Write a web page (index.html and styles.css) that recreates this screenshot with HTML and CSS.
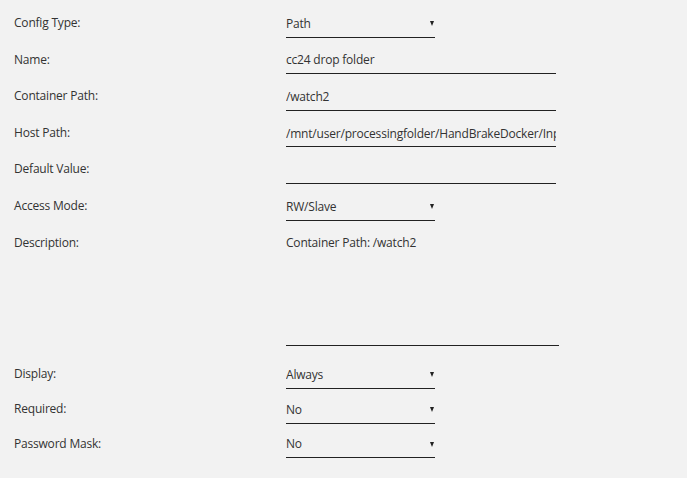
FILE: index.html
```html
<!DOCTYPE html>
<html lang="en">
<head>
  <meta charset="UTF-8">
  <meta name="viewport" content="width=device-width, initial-scale=1.0">
  <title>Add Path, Port, Variable, Label or Device</title>
  <link rel="stylesheet" href="styles.css">
</head>
<body>
  <form class="config">
    <div class="row">
      <label class="label" for="cfg-type">Config Type:</label>
      <div class="field select-wrap">
        <select id="cfg-type" class="select">
          <option>Path</option>
          <option>Port</option>
          <option>Variable</option>
          <option>Label</option>
          <option>Device</option>
        </select>
      </div>
    </div>

    <div class="row">
      <label class="label" for="cfg-name">Name:</label>
      <div class="field"><input id="cfg-name" class="input" type="text" value="cc24 drop folder"></div>
    </div>

    <div class="row">
      <label class="label" for="cfg-target">Container Path:</label>
      <div class="field"><input id="cfg-target" class="input" type="text" value="/watch2"></div>
    </div>

    <div class="row">
      <label class="label" for="cfg-value">Host Path:</label>
      <div class="field"><input id="cfg-value" class="input" type="text" value="/mnt/user/processingfolder/HandBrakeDocker/Input/cc24"></div>
    </div>

    <div class="row">
      <label class="label" for="cfg-default">Default Value:</label>
      <div class="field"><input id="cfg-default" class="input" type="text" value=""></div>
    </div>

    <div class="row">
      <label class="label" for="cfg-mode">Access Mode:</label>
      <div class="field select-wrap">
        <select id="cfg-mode" class="select">
          <option>RW/Slave</option>
          <option>RW</option>
          <option>RO</option>
          <option>RO/Slave</option>
        </select>
      </div>
    </div>

    <div class="row row-desc">
      <label class="label" for="cfg-desc">Description:</label>
      <div class="field"><textarea id="cfg-desc" class="textarea">Container Path: /watch2</textarea></div>
    </div>

    <div class="row row-compact">
      <label class="label" for="cfg-display">Display:</label>
      <div class="field select-wrap">
        <select id="cfg-display" class="select">
          <option>Always</option>
          <option>Advanced</option>
        </select>
      </div>
    </div>

    <div class="row row-compact">
      <label class="label" for="cfg-required">Required:</label>
      <div class="field select-wrap">
        <select id="cfg-required" class="select">
          <option>No</option>
          <option>Yes</option>
        </select>
      </div>
    </div>

    <div class="row row-compact">
      <label class="label" for="cfg-mask">Password Mask:</label>
      <div class="field select-wrap">
        <select id="cfg-mask" class="select">
          <option>No</option>
          <option>Yes</option>
        </select>
      </div>
    </div>
  </form>
</body>
</html>
```

FILE: styles.css
```css
html, body {
  margin: 0;
  background-color: #f2f2f2;
}
body {
  font-family: "Open Sans", "Liberation Sans", sans-serif;
  font-size: 12px;
  letter-spacing: -0.2px;
  color: #333;
}

.config {
  padding: 13px 0 0 14px;
}

.row {
  display: flex;
  align-items: flex-start;
  margin-bottom: 12px;
}
.row-desc {
  margin-bottom: 18.8px;
}
.row-compact {
  margin-bottom: 10px;
}

.label {
  width: 272px;
  flex: none;
  line-height: 16px;
  padding-top: 2px;
}

.field {
  position: relative;
}

.input,
.select,
.textarea {
  display: block;
  box-sizing: border-box;
  margin: 0;
  padding: 0;
  border: 0;
  border-bottom: 1px solid #222;
  border-radius: 0;
  background: transparent;
  font: inherit;
  letter-spacing: inherit;
  color: #333;
  outline: none;
}

.input {
  width: 270px;
  height: 24.6px;
  padding-bottom: 3px;
}

.select {
  -webkit-appearance: none;
  appearance: none;
  width: 149px;
  height: 24.6px;
  padding-bottom: 3px;
  cursor: pointer;
}

/* small arrow on the right edge of each dropdown */
.select-wrap::after {
  content: "";
  position: absolute;
  right: 1px;
  top: 8px;
  border-left: 2.5px solid transparent;
  border-right: 2.5px solid transparent;
  border-top: 5px solid #222;
  pointer-events: none;
}

.textarea {
  width: 273px;
  height: 113px;
  padding-top: 2px;
  line-height: 16px;
  resize: none;
}
```
